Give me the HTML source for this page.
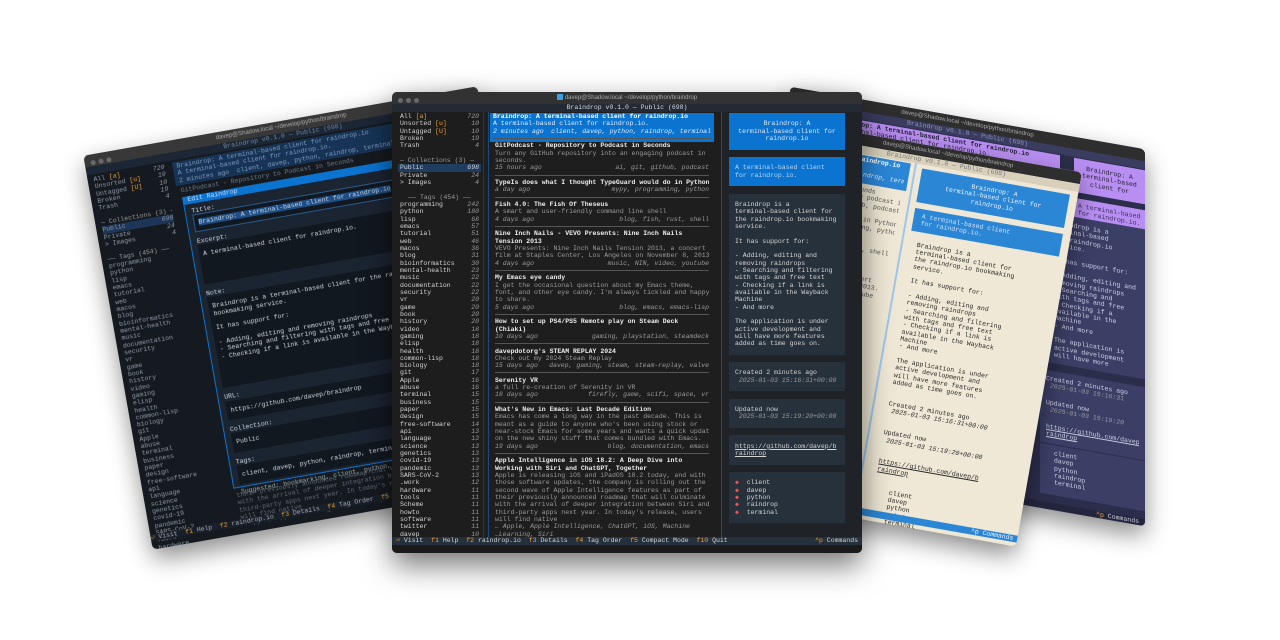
<!DOCTYPE html>
<html><head><meta charset="utf-8"><style>
*{margin:0;padding:0;box-sizing:border-box}
body{width:1280px;height:640px;background:#fff;overflow:hidden;position:relative;font-family:"Liberation Mono",monospace;font-size:6.5px;line-height:7.33px;color:#d4d4d4}
.win{position:absolute;overflow:hidden;border-radius:5px;box-shadow:0 10px 24px rgba(0,0,0,.45)}
.tb{height:12px;background:#383838;position:relative;font-family:"Liberation Sans",sans-serif;font-size:6px;color:#aaa;text-align:center;line-height:12px}
.dots{position:absolute;left:6px;top:4px}
.dots i{display:inline-block;width:5px;height:5px;border-radius:50%;background:#6a6a6a;margin-right:3px}
.l{height:7.33px;white-space:pre;overflow:hidden}
.r{display:flex;justify-content:space-between}
.it{font-style:italic}
.mu{color:#9a9a9a}
.y{color:#f0a030}
.b{font-weight:bold;color:#eee}
.sep{height:7.33px;position:relative}
.sep:after{content:"";position:absolute;left:0;right:0;top:3px;border-top:1px solid #555}
.box{background:#27313c;padding:7.33px 6px;margin:0 0 7.33px 0}
.blue{background:#0b73d0;color:#dfe9f5}
</style></head><body>

<!-- LEFT WINDOW -->
<div class="win" style="left:115px;top:118px;width:400px;height:400px;transform:rotate(-10deg);background:#151a20;filter:blur(.3px)">
 <div class="tb">davep@Shadow.local ~/develop/python/braindrop<div class="dots"><i></i><i></i><i></i></div></div>
 <div style="position:absolute;left:0;top:12px;width:400px;height:8px;background:#1c2634;text-align:center;color:#6f8aa8">Braindrop v0.1.0 — Public (698)</div>
 <div style="position:absolute;left:6px;top:22px;width:72px;color:#8d98a5">
  <div class="l r"><span>All <span class="y">[a]</span></span><span class="it">720</span></div>
  <div class="l r"><span>Unsorted <span class="y">[u]</span></span><span class="it">10</span></div>
  <div class="l r"><span>Untagged <span class="y">[U]</span></span><span class="it">10</span></div>
  <div class="l r"><span>Broken</span><span class="it">19</span></div>
  <div class="l r"><span>Trash</span><span class="it">4</span></div>
  <div class="l"> </div>
  <div class="l mu">— Collections (3) —</div>
  <div class="l r" style="background:#1d3556"><span>Public</span><span class="it">698</span></div>
  <div class="l r"><span>Private</span><span class="it">24</span></div>
  <div class="l r"><span>&gt; Images</span><span class="it">4</span></div>
  <div class="l"> </div>
  <div class="l mu">—— Tags (454) ——</div>
  <div class="l">programming</div><div class="l">python</div><div class="l">lisp</div><div class="l">emacs</div><div class="l">tutorial</div><div class="l">web</div><div class="l">macos</div><div class="l">blog</div><div class="l">bioinformatics</div><div class="l">mental-health</div><div class="l">music</div><div class="l">documentation</div><div class="l">security</div><div class="l">vr</div><div class="l">game</div><div class="l">book</div><div class="l">history</div><div class="l">video</div><div class="l">gaming</div><div class="l">elisp</div><div class="l">health</div><div class="l">common-lisp</div><div class="l">biology</div><div class="l">git</div><div class="l">Apple</div><div class="l">abuse</div><div class="l">terminal</div><div class="l">business</div><div class="l">paper</div><div class="l">design</div><div class="l">free-software</div><div class="l">api</div><div class="l">language</div><div class="l">science</div><div class="l">genetics</div><div class="l">covid-19</div><div class="l">pandemic</div><div class="l">SARS-CoV-2</div><div class="l">.work</div><div class="l">hardware</div><div class="l">tools</div><div class="l">Scheme</div><div class="l">howto</div><div class="l">software</div><div class="l">twitter</div><div class="l">davep</div>
 </div>
 <div style="position:absolute;left:86px;top:22px;width:314px;height:24px;background:#173456;color:#7e9cbf;padding:1px 4px">
  <div class="l">Braindrop: A terminal-based client for raindrop.io</div>
  <div class="l">A terminal-based client for raindrop.io.</div>
  <div class="l">2 minutes ago  client, davep, python, raindrop, terminal</div>
 </div>
 <div style="position:absolute;left:86px;top:48px;width:314px;color:#6f7a86;padding:0 4px" class="l">GitPodcast - Repository to Podcast in Seconds</div>
 <div style="position:absolute;left:90px;top:58px;width:310px;height:296px;background:#1b2431;border:1px solid #0b73d0;border-top:8px solid #0b73d0;color:#cfd6de;padding:4px 6px">
  <div style="position:absolute;top:-8px;left:4px;color:#cfe0f5" class="l">Edit Raindrop</div>
  <div class="l">Title:</div>
  <div style="background:#111820;border:1px solid #2a5a8c;padding:4px 4px;margin-bottom:6px"><span style="background:#1d4f86">Braindrop: A terminal-based client for raindrop.io</span></div>
  <div class="l">Excerpt:</div>
  <div style="background:#111820;padding:6px 4px;height:40px;margin-bottom:6px">A terminal-based client for raindrop.io.</div>
  <div class="l">Note:</div>
  <div style="background:#111820;padding:6px 4px;height:92px;margin-bottom:6px">
   <div class="l">Braindrop is a terminal-based client for the raindrop.io</div>
   <div class="l">bookmaking service.</div><div class="l"> </div>
   <div class="l">It has support for:</div><div class="l"> </div>
   <div class="l">- Adding, editing and removing raindrops</div>
   <div class="l">- Searching and filtering with tags and free text</div>
   <div class="l">- Checking if a link is available in the Wayback Machine</div>
  </div>
  <div class="l">URL:</div>
  <div style="background:#111820;padding:6px 4px;margin-bottom:6px">https://github.com/davep/braindrop</div>
  <div class="l">Collection:</div>
  <div style="background:#111820;padding:6px 4px;margin-bottom:6px">Public</div>
  <div class="l">Tags:</div>
  <div style="background:#111820;padding:6px 4px;margin-bottom:4px">client, davep, python, raindrop, terminal</div>
  <div class="l" style="color:#9aa">Suggested: bookmarking, client, python, raindrop</div>
  <div style="position:absolute;right:0;bottom:10px;width:54px;height:16px;background:#43c35c;color:#173;text-align:center;line-height:16px;font-weight:bold">Save [F2]</div>
 </div>
 <div style="position:absolute;left:86px;top:358px;width:314px;color:#5e6873;padding:0 6px">
  <div class="l">their previously announced roadmap that will culminate</div>
  <div class="l">with the arrival of deeper integration between Siri and</div>
  <div class="l">third-party apps next year. In today's release, users</div>
  <div class="l">will find native</div>
  <div class="l">… Apple, Apple Intelligence, ChatGPT, iOS, Machine</div>
 </div>
 <div class="l" style="position:absolute;left:0;bottom:8px;width:400px;background:#182029;color:#aab"><span class="y">⏎</span> Visit  <span class="y">f1</span> Help  <span class="y">f2</span> raindrop.io  <span class="y">f3</span> Details  <span class="y">f4</span> Tag Order  <span class="y">f5</span> Compact Mode</div>
</div>

<!-- PURPLE WINDOW -->
<div class="win" style="left:790px;top:118px;width:355px;height:377px;transform:skewY(10deg);background:#2b2e4a;color:#cfd0e6">
 <div class="tb" style="background:#2e2e2e">davep@Shadow.local ~/develop/python/braindrop<div class="dots"><i></i><i></i><i></i></div></div>
 <div style="position:absolute;left:0;top:12px;width:355px;height:8px;background:#3a3c60;text-align:center;color:#8f92b8">Braindrop v0.1.0 — Public (698)</div>
 <div style="position:absolute;left:40px;top:21px;width:230px;height:32px;background:#b98ef2;color:#1e1e30;padding:1px 4px">
  <div class="l b" style="color:#1e1e30">Braindrop: A terminal-based client for raindrop.io</div>
  <div class="l">A terminal-based client for raindrop.io.</div>
  <div class="l it">client, davep, python, raindrop, terminal</div>
 </div>
 <div style="position:absolute;left:278px;top:21px;width:77px;padding:0 0 0 6px">
  <div style="background:#b98ef2;color:#1e1e30;padding:6px 4px;text-align:center;margin-bottom:6px"><div class="l">Braindrop: A</div><div class="l">terminal-based</div><div class="l">client for</div></div>
  <div style="background:#b98ef2;color:#3c2c60;padding:4px;margin-bottom:6px"><div class="l">A terminal-based</div><div class="l">for raindrop.io.</div></div>
 </div>
 <div style="position:absolute;left:258px;top:80px;width:97px;background:#3b3f66;padding:6px 6px;height:150px">
  <div class="l">Braindrop is a</div><div class="l">terminal-based</div><div class="l">the raindrop.io</div><div class="l">service.</div><div class="l"> </div><div class="l">It has support for:</div><div class="l"> </div><div class="l">- Adding, editing and</div><div class="l">removing raindrops</div><div class="l">- Searching and</div><div class="l">with tags and free</div><div class="l">- Checking if a</div><div class="l">available in the</div><div class="l">Machine</div><div class="l">- And more</div><div class="l"> </div><div class="l">The application is</div><div class="l">active development</div><div class="l">will have more</div>
 </div>
 <div style="position:absolute;left:250px;top:238px;width:105px;background:#3b3f66;padding:5px 6px"><div class="l">Created 2 minutes ago</div><div class="l it mu"> 2025-01-03 15:16:31</div></div>
 <div style="position:absolute;left:250px;top:262px;width:105px;background:#3b3f66;padding:5px 6px"><div class="l">Updated now</div><div class="l it mu"> 2025-01-03 15:19:20</div></div>
 <div style="position:absolute;left:250px;top:286px;width:105px;background:#3b3f66;padding:5px 6px;text-decoration:underline"><div class="l">https://github.com/davep/b</div><div class="l">raindrop</div></div>
 <div style="position:absolute;left:250px;top:312px;width:105px;background:#3b3f66;padding:5px 6px 5px 14px;height:50px"><div class="l">client</div><div class="l">davep</div><div class="l">python</div><div class="l">raindrop</div><div class="l">terminal</div></div>
 <div class="l" style="position:absolute;left:0;bottom:0;width:355px;background:#23253d;text-align:right;padding-right:6px"><span class="y">^p</span> Commands</div>
</div>

<!-- BEIGE WINDOW -->
<div class="win" style="left:781px;top:146px;width:270px;height:380px;transform:rotate(10deg);background:#efe8d6;color:#2a2a2a">
 <div class="tb" style="background:#2e2e2e">davep@Shadow.local ~/develop/python/braindrop<div class="dots"><i></i><i></i><i></i></div></div>
 <div style="position:absolute;left:0;top:12px;width:270px;height:8px;background:#d8d0bb;text-align:center;color:#777">Braindrop v0.1.0 — Public (698)</div>
 <div style="position:absolute;left:0;top:21px;width:100px;height:28px;background:#2b86d6;color:#e6f0fa;padding:1px 4px">
  <div class="l b" style="color:#fff">client for raindrop.io</div><div class="l">raindrop.io.</div><div class="l it">, python, raindrop, terminal</div>
 </div>
 <div style="position:absolute;left:0;top:52px;width:100px;color:#555;padding:0 4px">
  <div class="l">odcast in Seconds</div><div class="l">to an engaging podcast in</div><div class="l">ai, git, github, podcast</div><div class="l"> </div>
  <div class="l">Guard would do in Python</div><div class="l">mypy, programming, python</div><div class="l"> </div>
  <div class="l">d line shell</div><div class="l">blog, fish, rust, shell</div><div class="l"> </div>
  <div class="l">Nine Inch Nails</div><div class="l"> </div><div class="l">sion 2013, a concert</div><div class="l">s on November 8, 2013.</div><div class="l">, NIN, video, youtube</div><div class="l"> </div>
  <div class="l">my Emacs theme,</div><div class="l">tickled and happy</div><div class="l">, emacs, emacs-lisp</div><div class="l"> </div>
  <div class="l">team Deck</div><div class="l"> </div><div class="l">tation, steamdeck</div>
 </div>
 <div style="position:absolute;left:104px;top:20px;width:2px;height:350px;background:#9fc6ea"></div>
 <div style="position:absolute;left:112px;top:24px;width:150px">
  <div style="background:#2b86d6;color:#eaf2fb;padding:6px 4px;text-align:center;margin-bottom:6px"><div class="l">Braindrop: A</div><div class="l">terminal-based client for</div><div class="l">raindrop.io</div></div>
  <div style="background:#2b86d6;color:#cfe2f5;padding:4px 8px;margin-bottom:10px"><div class="l">A terminal-based client</div><div class="l">for raindrop.io.</div></div>
  <div style="padding:0 8px">
   <div class="l">Braindrop is a</div><div class="l">terminal-based client for</div><div class="l">the raindrop.io bookmaking</div><div class="l">service.</div><div class="l"> </div><div class="l">It has support for:</div><div class="l"> </div><div class="l">- Adding, editing and</div><div class="l">removing raindrops</div><div class="l">- Searching and filtering</div><div class="l">with tags and free text</div><div class="l">- Checking if a link is</div><div class="l">available in the Wayback</div><div class="l">Machine</div><div class="l">- And more</div><div class="l"> </div><div class="l">The application is under</div><div class="l">active development and</div><div class="l">will have more features</div><div class="l">added as time goes on.</div><div class="l"> </div><div class="l"> </div>
   <div class="l">Created 2 minutes ago</div><div class="l it"> 2025-01-03 15:16:31+00:00</div><div class="l"> </div><div class="l"> </div>
   <div class="l">Updated now</div><div class="l it"> 2025-01-03 15:19:20+00:00</div><div class="l"> </div><div class="l"> </div>
   <div class="l" style="text-decoration:underline">https://github.com/davep/b</div><div class="l" style="text-decoration:underline">raindrop</div><div class="l"> </div><div class="l"> </div>
   <div class="l">    client</div><div class="l">    davep</div><div class="l">    python</div><div class="l">    raindrop</div><div class="l">    terminal</div>
  </div>
 </div>
 <div class="l" style="position:absolute;left:0;bottom:4px;width:270px;background:#2b86d6;color:#eaf2fb;padding:0 4px;display:flex;justify-content:space-between"><span>f10 Quit</span><span>^p Commands</span></div>
</div>

<!-- CENTER WINDOW -->
<div class="win" style="left:392px;top:92px;width:470px;height:461px;background:#1e1e1e;box-shadow:0 12px 30px rgba(0,0,0,.55)">
 <div class="tb" style="background:#323232">
  <span style="display:inline-block;width:6px;height:6px;background:#3aa0e0;vertical-align:-1px;margin-right:2px"></span>davep@Shadow.local ~/develop/python/braindrop
  <div class="dots"><i></i><i></i><i></i></div></div>
 <div class="l" style="background:#232a33;text-align:center;color:#cfd6de;height:8px">Braindrop v0.1.0 — Public (698)</div>
 <!-- sidebar -->
 <div style="position:absolute;left:0;top:20px;width:92px;height:427px;background:#1d1d1d;border-right:1px solid #1f3a57"></div>
 <div style="position:absolute;left:8px;top:21px;width:79px">
  <div class="l r"><span>All <span class="y">[a]</span></span><span class="it mu">720</span></div>
  <div class="l r"><span>Unsorted <span class="y">[u]</span></span><span class="it mu">10</span></div>
  <div class="l r"><span>Untagged <span class="y">[U]</span></span><span class="it mu">10</span></div>
  <div class="l r"><span>Broken</span><span class="it mu">19</span></div>
  <div class="l r"><span>Trash</span><span class="it mu">4</span></div>
  <div class="l"> </div>
  <div class="l mu">— Collections (3) —</div>
  <div class="l r" style="background:#1f3d60;margin:0 -2px;padding:0 2px"><span>Public</span><span class="it">698</span></div>
  <div class="l r"><span>Private</span><span class="it mu">24</span></div>
  <div class="l r"><span>&gt; Images</span><span class="it mu">4</span></div>
  <div class="l"> </div>
  <div class="l mu" style="text-align:center">—— Tags (454) ——</div>
  <div class="l r"><span>programming</span><span class="it mu">242</span></div>
  <div class="l r"><span>python</span><span class="it mu">180</span></div>
  <div class="l r"><span>lisp</span><span class="it mu">68</span></div>
  <div class="l r"><span>emacs</span><span class="it mu">57</span></div>
  <div class="l r"><span>tutorial</span><span class="it mu">51</span></div>
  <div class="l r"><span>web</span><span class="it mu">46</span></div>
  <div class="l r"><span>macos</span><span class="it mu">36</span></div>
  <div class="l r"><span>blog</span><span class="it mu">31</span></div>
  <div class="l r"><span>bioinformatics</span><span class="it mu">30</span></div>
  <div class="l r"><span>mental-health</span><span class="it mu">23</span></div>
  <div class="l r"><span>music</span><span class="it mu">22</span></div>
  <div class="l r"><span>documentation</span><span class="it mu">22</span></div>
  <div class="l r"><span>security</span><span class="it mu">22</span></div>
  <div class="l r"><span>vr</span><span class="it mu">20</span></div>
  <div class="l r"><span>game</span><span class="it mu">20</span></div>
  <div class="l r"><span>book</span><span class="it mu">20</span></div>
  <div class="l r"><span>history</span><span class="it mu">20</span></div>
  <div class="l r"><span>video</span><span class="it mu">18</span></div>
  <div class="l r"><span>gaming</span><span class="it mu">18</span></div>
  <div class="l r"><span>elisp</span><span class="it mu">18</span></div>
  <div class="l r"><span>health</span><span class="it mu">18</span></div>
  <div class="l r"><span>common-lisp</span><span class="it mu">18</span></div>
  <div class="l r"><span>biology</span><span class="it mu">18</span></div>
  <div class="l r"><span>git</span><span class="it mu">17</span></div>
  <div class="l r"><span>Apple</span><span class="it mu">16</span></div>
  <div class="l r"><span>abuse</span><span class="it mu">16</span></div>
  <div class="l r"><span>terminal</span><span class="it mu">15</span></div>
  <div class="l r"><span>business</span><span class="it mu">15</span></div>
  <div class="l r"><span>paper</span><span class="it mu">15</span></div>
  <div class="l r"><span>design</span><span class="it mu">15</span></div>
  <div class="l r"><span>free-software</span><span class="it mu">14</span></div>
  <div class="l r"><span>api</span><span class="it mu">13</span></div>
  <div class="l r"><span>language</span><span class="it mu">13</span></div>
  <div class="l r"><span>science</span><span class="it mu">13</span></div>
  <div class="l r"><span>genetics</span><span class="it mu">13</span></div>
  <div class="l r"><span>covid-19</span><span class="it mu">13</span></div>
  <div class="l r"><span>pandemic</span><span class="it mu">13</span></div>
  <div class="l r"><span>SARS-CoV-2</span><span class="it mu">13</span></div>
  <div class="l r"><span>.work</span><span class="it mu">12</span></div>
  <div class="l r"><span>hardware</span><span class="it mu">11</span></div>
  <div class="l r"><span>tools</span><span class="it mu">11</span></div>
  <div class="l r"><span>Scheme</span><span class="it mu">11</span></div>
  <div class="l r"><span>howto</span><span class="it mu">11</span></div>
  <div class="l r"><span>software</span><span class="it mu">11</span></div>
  <div class="l r"><span>twitter</span><span class="it mu">11</span></div>
  <div class="l r"><span>davep</span><span class="it mu">10</span></div>
 </div>
 <!-- middle -->
 <div style="position:absolute;left:96px;top:20px;width:1px;height:427px;background:#1f4a78"></div>
 <div style="position:absolute;left:329px;top:20px;width:1px;height:427px;background:#1f4a78"></div>
 <div style="position:absolute;left:98px;top:21px;width:224px">
  <div style="background:#0b73d0;padding:0 3px;color:#e4eefa">
   <div class="l b" style="color:#fff">Braindrop: A terminal-based client for raindrop.io</div>
   <div class="l">A terminal-based client for raindrop.io.</div>
   <div class="l r it"><span>2 minutes ago</span><span>client, davep, python, raindrop, terminal</span></div>
   <div class="sep" style="height:7.33px"></div>
  </div>
  <div style="padding:0 5px">
   <div class="l b">GitPodcast - Repository to Podcast in Seconds</div>
   <div class="l mu">Turn any GitHub repository into an engaging podcast in</div>
   <div class="l mu">seconds.</div>
   <div class="l r it mu"><span>15 hours ago</span><span>ai, git, github, podcast</span></div>
   <div class="sep"></div>
   <div class="l b">TypeIs does what I thought TypeGuard would do in Python</div>
   <div class="l r it mu"><span>a day ago</span><span>mypy, programming, python</span></div>
   <div class="sep"></div>
   <div class="l b">Fish 4.0: The Fish Of Theseus</div>
   <div class="l mu">A smart and user-friendly command line shell</div>
   <div class="l r it mu"><span>4 days ago</span><span>blog, fish, rust, shell</span></div>
   <div class="sep"></div>
   <div class="l b">Nine Inch Nails - VEVO Presents: Nine Inch Nails</div>
   <div class="l b">Tension 2013</div>
   <div class="l mu">VEVO Presents: Nine Inch Nails Tension 2013, a concert</div>
   <div class="l mu">film at Staples Center, Los Angeles on November 8, 2013.</div>
   <div class="l r it mu"><span>4 days ago</span><span>music, NIN, video, youtube</span></div>
   <div class="sep"></div>
   <div class="l b">My Emacs eye candy</div>
   <div class="l mu">I get the occasional question about my Emacs theme,</div>
   <div class="l mu">font, and other eye candy. I'm always tickled and happy</div>
   <div class="l mu">to share.</div>
   <div class="l r it mu"><span>5 days ago</span><span>blog, emacs, emacs-lisp</span></div>
   <div class="sep"></div>
   <div class="l b">How to set up PS4/PS5 Remote play on Steam Deck</div>
   <div class="l b">(Chiaki)</div>
   <div class="l r it mu"><span>10 days ago</span><span>gaming, playstation, steamdeck</span></div>
   <div class="sep"></div>
   <div class="l b">davepdotorg's STEAM REPLAY 2024</div>
   <div class="l mu">Check out my 2024 Steam Replay</div>
   <div class="l r it mu"><span>15 days ago</span><span>davep, gaming, steam, steam-replay, valve</span></div>
   <div class="sep"></div>
   <div class="l b">Serenity VR</div>
   <div class="l mu">a full re-creation of Serenity in VR</div>
   <div class="l r it mu"><span>18 days ago</span><span>firefly, game, scifi, space, vr</span></div>
   <div class="sep"></div>
   <div class="l b">What's New in Emacs: Last Decade Edition</div>
   <div class="l mu">Emacs has come a long way in the past decade. This is</div>
   <div class="l mu">meant as a guide to anyone who's been using stock or</div>
   <div class="l mu">near-stock Emacs for some years and wants a quick update</div>
   <div class="l mu">on the new shiny stuff that comes bundled with Emacs.</div>
   <div class="l r it mu"><span>19 days ago</span><span>blog, documentation, emacs</span></div>
   <div class="sep"></div>
   <div class="l b">Apple Intelligence in iOS 18.2: A Deep Dive into</div>
   <div class="l b">Working with Siri and ChatGPT, Together</div>
   <div class="l mu">Apple is releasing iOS and iPadOS 18.2 today, and with</div>
   <div class="l mu">those software updates, the company is rolling out the</div>
   <div class="l mu">second wave of Apple Intelligence features as part of</div>
   <div class="l mu">their previously announced roadmap that will culminate</div>
   <div class="l mu">with the arrival of deeper integration between Siri and</div>
   <div class="l mu">third-party apps next year. In today's release, users</div>
   <div class="l mu">will find native</div>
   <div class="l it mu">… Apple, Apple Intelligence, ChatGPT, iOS, Machine</div>
   <div class="l it mu">…Learning, Siri</div>
  </div>
 </div>
 <!-- right -->
 <div style="position:absolute;left:330px;top:20px;width:140px;height:427px;background:#1f2226"></div>
 <div style="position:absolute;left:337px;top:21px;width:116px">
  <div class="box blue" style="text-align:center;padding:7.33px 4px"><div class="l">Braindrop: A</div><div class="l">terminal-based client for</div><div class="l">raindrop.io</div></div>
  <div class="box blue" style="color:#bcd6f2"><div class="l">A terminal-based client</div><div class="l">for raindrop.io.</div></div>
  <div class="box">
   <div class="l">Braindrop is a</div><div class="l">terminal-based client for</div><div class="l">the raindrop.io bookmaking</div><div class="l">service.</div><div class="l"> </div><div class="l">It has support for:</div><div class="l"> </div><div class="l">- Adding, editing and</div><div class="l">removing raindrops</div><div class="l">- Searching and filtering</div><div class="l">with tags and free text</div><div class="l">- Checking if a link is</div><div class="l">available in the Wayback</div><div class="l">Machine</div><div class="l">- And more</div><div class="l"> </div><div class="l">The application is under</div><div class="l">active development and</div><div class="l">will have more features</div><div class="l">added as time goes on.</div>
  </div>
  <div class="box"><div class="l">Created 2 minutes ago</div><div class="l it mu"> 2025-01-03 15:16:31+00:00</div></div>
  <div class="box"><div class="l">Updated now</div><div class="l it mu"> 2025-01-03 15:19:20+00:00</div></div>
  <div class="box" style="text-decoration:underline"><div class="l">https://github.com/davep/b</div><div class="l">raindrop</div></div>
  <div class="box"><div class="l"><span style="color:#e55">◆</span>  client</div><div class="l"><span style="color:#e55">◆</span>  davep</div><div class="l"><span style="color:#e55">◆</span>  python</div><div class="l"><span style="color:#e55">◆</span>  raindrop</div><div class="l"><span style="color:#e55">◆</span>  terminal</div></div>
 </div>
 <!-- footer -->
 <div class="l" style="position:absolute;left:0;top:445px;width:470px;height:8px;background:#24303c;padding:0 4px;display:flex;justify-content:space-between">
  <span><span class="y">⏎</span> Visit  <span class="y">f1</span> Help  <span class="y">f2</span> raindrop.io  <span class="y">f3</span> Details  <span class="y">f4</span> Tag Order  <span class="y">f5</span> Compact Mode  <span class="y">f10</span> Quit</span>
  <span><span class="y">^p</span> Commands</span>
 </div>
 <div style="position:absolute;left:0;top:453px;width:470px;height:8px;background:#1a1a1a"></div>
</div>
</body></html>
